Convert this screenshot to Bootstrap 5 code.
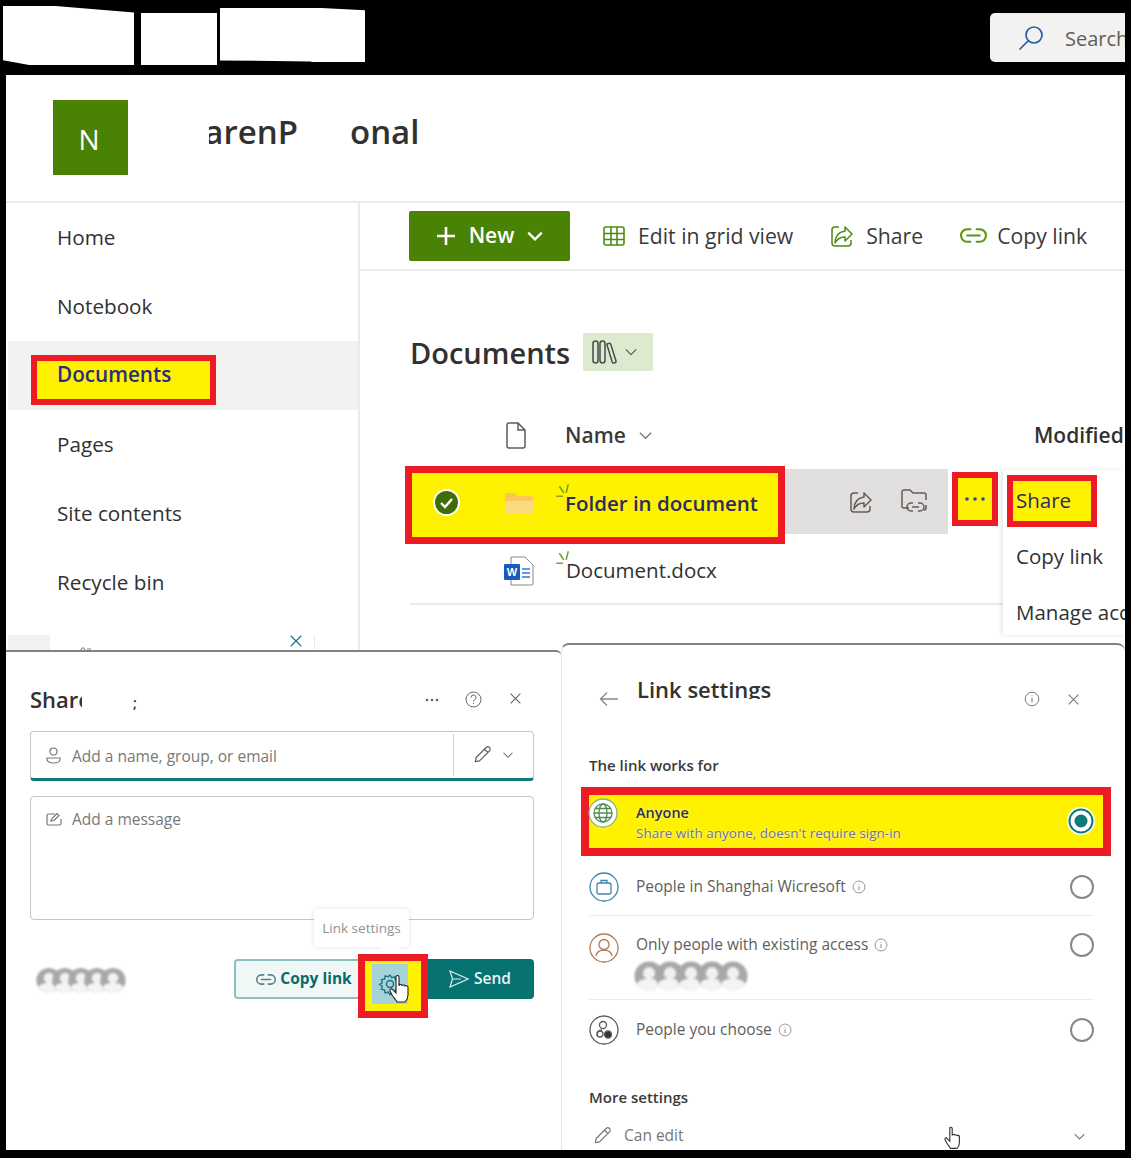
<!DOCTYPE html>
<html lang="en"><head><meta charset="utf-8"><title>Share</title>
<link href="https://cdn.jsdelivr.net/npm/bootstrap@5.3.0/dist/css/bootstrap.min.css" rel="stylesheet">
<style>
html,body{margin:0;height:1158px;overflow:hidden;background:#000}
body{font-family:"Open Sans","Noto Sans",sans-serif;color:#323130;width:1131px}
svg{display:block;flex:none}
.shot{width:1131px;height:1158px;padding-right:6px;overflow:hidden}
.topbar{height:75px;position:relative}
.blot{position:absolute;background:#fff}
.b1{left:3px;top:6px;width:131px;height:59px;clip-path:polygon(0 0,40% 0,100% 11%,100% 100%,20% 100%,0 92%)}
.b2{left:141px;top:13px;width:76px;height:52px}
.b3{left:220px;top:8px;width:145px;height:54px;clip-path:polygon(0 0,70% 0,100% 4%,100% 100%,63% 100%,63% 99%,0 97%)}
.searchbox{position:absolute;left:990px;top:13px;width:135px;height:49px;background:#f3f2f1;border-radius:5px 0 0 5px;font-size:20px;color:#605e5c;overflow:hidden;padding-left:28px;gap:21px;white-space:nowrap}
.sheet{margin-left:6px;background:#fff;height:1075px;overflow:hidden}
.upper{height:575px}
.sitehead{height:128px;border-bottom:2px solid #edebe9;padding-left:47px}
.logo{width:75px;height:75px;background:#498205;color:#fff;font-size:28px;margin-top:25px;padding:2px 3px 0 0}
.sitename{font-size:33px;font-weight:600;color:#323130;margin-top:31px;line-height:52px;height:52px}
.sn1{margin-left:81px;width:89px;overflow:hidden;white-space:nowrap;direction:rtl}
.sn2{margin-left:52px}
.leftnav{width:354px;flex:none;border-right:2px solid #edebe9;position:relative;height:447px;font-size:20.700px}
.navitem{height:69px;padding-left:51px;color:#323130}
.navitem.current{background:#f3f2f1;margin-left:2px;padding-left:23px}
.redbox{border:solid #ed1c24;background:#fff200}
.navmark{width:185px;height:50px;border-width:6px;padding-left:20px;font-weight:600;color:#2b2b80;margin-top:14px;line-height:27px}
.stub{height:16px;position:relative;margin-top:18px}
.stubgrey{position:absolute;left:2px;top:0;width:42px;height:15px;background:#f3f2f1}
.stubx{position:absolute;left:283px;top:-1px}
.stubline{position:absolute;left:308px;top:0;width:1px;height:15px;background:#edebe9}
.stubarc{position:absolute;left:74px;top:11px}
.mainpane{flex:1;position:relative;min-width:0;overflow:hidden;height:447px}
.cmdbar{height:68px;border-bottom:2px solid #edebe9;padding-left:49px;font-size:21.200px;color:#3b3a39;white-space:nowrap}
.newbtn{width:161px;height:50px;flex:none;background:#498205;color:#fff;font-weight:600;border-radius:2px;border:0;font-size:21px;gap:12px;margin-right:32px}
.cmditem{gap:12px;margin-right:37px}
.cmditem.tight{gap:10px;margin-right:0}
.doctitle{padding:62px 0 0 50px;gap:13px;height:134px}
.doctitle h1{font-size:29px;font-weight:600;margin:1px 0 0;color:#323130;line-height:38px}
.libchip{width:70px;height:38px;background:#dcebd0;border-radius:2px;gap:6px;padding-left:8px}
.colhead{height:61px;font-size:21px;font-weight:600;position:relative;padding-left:146px;white-space:nowrap}
.colname{margin-left:39px;gap:12px;color:#3b3a39;width:469px}
.folderrow{height:78px;margin-left:45px;position:relative}
.foldermark{width:380px;height:78px;border-width:7px;font-weight:600;font-size:20.500px;color:#2b2b66;white-space:nowrap}
.rowext{width:163px;height:65px;background:#e1dfdd;gap:27px;padding-left:64px;margin-top:3px}
.dotsmark{width:46px;height:54px;border-width:6px;margin:-13px 0 0 4px}
.docrow{height:71px;margin-left:50px;border-bottom:2px solid #edebe9;margin-right:122px;font-size:20.500px;margin-top:-10px;white-space:nowrap;padding:4px 0 0 156px;position:relative}
.spark{position:absolute}
.rowmenu{position:absolute;right:0;top:267px;width:122px;height:165px;background:#fff;box-shadow:-2px 0 4px rgba(0,0,0,.1);font-size:20.500px;white-space:nowrap;overflow:hidden;padding-left:13px}
.sharemark{width:90px;height:52px;border-width:6px;margin:5px 0 1px -9px;padding-left:3px;line-height:38px;color:#2b2b66}
.menurow{height:56px}
.lower{margin-top:-7px;position:relative;height:507px}
.dlg{background:#fff;position:relative}
.dlgleft{width:555px;height:500px;margin-top:7px;border-top:2px solid #85817e;border-top-right-radius:5px;padding:0 27px 0 24px;flex:none}
.dlgright{flex:1;border-top:2px solid #85817e;border-left:1px solid #e6e6e6;border-radius:8px 8px 0 0;padding:0 31px 0 27px;height:507px;min-width:0}
.dlghead{font-size:22px;font-weight:600;color:#323130;white-space:nowrap;height:79px;padding-top:31px}
.shareclip{width:52px;overflow:hidden}
.shareend{font-size:14px;margin:9px 0 0 51px}
.fieldbox{border:1px solid #c8c6c4;border-radius:4px;color:#7a7876;font-size:15.500px;background:#fff}
.peoplebox{height:50px;border-bottom:3px solid #0b7a78;padding-left:15px;gap:10px}
.peopletext{margin-top:4px;margin-left:1px}
.sep{width:1px;height:42px;background:#d8d6d4;margin-left:auto}
.permwrap{width:69px;gap:10px;padding-left:8px}
.msgbox{height:124px;margin-top:15px;padding:12px 15px;gap:10px;align-items:flex-start}
.actions{margin-top:39px;position:relative}
.avatars{margin:8px 0 0 6px;filter:blur(.8px);width:100px;height:27px}
.avatars svg+svg{margin-left:-10px}
.pill{height:40px;font-weight:600;gap:5px;white-space:nowrap}
.copypill{width:126px;background:#eff7f7;border:2px solid #8cc0bf;color:#0b6a68;border-radius:4px 0 0 4px;margin-left:auto;position:relative;font-size:15.500px;font-weight:700;gap:4px;padding-left:14px}
.gearmark{width:70px;height:64px;border-width:7px;margin:-5px 0 0 -2px;position:relative}
.gearcell{width:36px;height:40px;background:#a6d3d9;margin:3px 0 0 7px}
.sendpill{width:106px;background:#077370;color:#eaf4f4;border-radius:0 4px 4px 0;padding-right:2px;font-size:15.500px}
.tipbox{position:absolute;left:284px;top:-50px;width:95px;height:38px;background:#fff;box-shadow:0 0 5px rgba(0,0,0,.12);font-size:13.500px;color:#929090;border-radius:3px}
.tipbox::after{content:"";position:absolute;left:70px;bottom:-7px;width:14px;height:14px;background:#fff;transform:rotate(45deg)}
.cursor{position:absolute}
.lsetttitle{height:24px;overflow:hidden;font-size:22px;line-height:28px;font-weight:600;margin-top:30px;margin-left:18px;white-space:nowrap;color:#323130}
.lsethead{height:109px}
.grouplabel{font-size:15px;font-weight:600;color:#3b3a39;height:22px;line-height:22px}
.anyone{width:530px;height:69px;border-width:8px;margin:11px 0 0 -8px;position:relative;font-size:14.500px;padding-top:8px}
.anyname{font-weight:600;color:#323130;line-height:20px;text-shadow:0 0 2px #fff}
.anysub{color:#6f6e9a;font-size:13.500px;line-height:21px;text-shadow:0 0 2px #fff;white-space:nowrap}
.optrow{border-bottom:1px solid #edebe9;font-size:15.500px;color:#605e5c;gap:17px;position:relative}
.optrow.flush{border-bottom:0}
.radio{width:24px;height:24px;border:2px solid #8a8886;border-radius:50%;margin-left:auto}
.cand{display:flex;align-items:center;gap:6px;white-space:nowrap}
.avstack{filter:blur(.9px);margin:5px 0 0 -2px}
.avstack svg+svg{margin-left:-9px}
.moregroup{margin-top:26px}
.canedit{height:44px;font-size:15.500px;color:#797775;gap:12px;padding-left:3px;position:relative;margin-top:6px}
</style></head>
<body>
<svg width="0" height="0" style="position:absolute"><defs>
<symbol id="av" viewBox="0 0 32 32"><circle cx="16" cy="16" r="15.500" fill="#a8a8a8"/><circle cx="16" cy="13" r="6.500" fill="#f1f1f1"/><path d="M3 24c3-4 7-5 13-5s10 1 13 5c-3 5-8 8-13 8S6 29 3 24Z" fill="#f4f4f4"/></symbol>
<symbol id="spk" viewBox="0 0 16 16"><path d="M8 14 2 14" fill="none" stroke="#8a9a30" stroke-width="1.600" stroke-linecap="round"/><path d="M9 10 5 4M12 10 14 2" fill="none" stroke="#6b9c20" stroke-width="1.600" stroke-linecap="round"/></symbol>
<symbol id="shr" viewBox="0 0 24 24"><path d="M15 3l7 7-7 7v-4c-5 0-8 2-10 6 0-7 4-11 10-12V3Z" fill="none" stroke="currentColor" stroke-width="1.500" stroke-linejoin="round"/><path d="M9 3H5a3 3 0 0 0-3 3v13a3 3 0 0 0 3 3h13a3 3 0 0 0 3-3v-3" fill="none" stroke="currentColor" stroke-width="1.500"/></symbol>
<symbol id="lnk" viewBox="0 0 26 16"><path d="M10 2H7a6 6 0 0 0 0 12h3M16 2h3a6 6 0 0 1 0 12h-3M7 8h12" fill="none" stroke="currentColor" stroke-width="2" stroke-linecap="round"/></symbol>
<symbol id="pen" viewBox="0 0 24 24"><path d="M4 20l1-5L17 3c1-1 3-1 4 0s1 3 0 4L9 19l-5 1ZM15 5l4 4" fill="none" stroke="currentColor" stroke-width="1.500" stroke-linejoin="round"/></symbol>
<symbol id="chev" viewBox="0 0 16 16"><path d="M2 5l6 6 6-6" fill="none" stroke="currentColor" stroke-width="1.400"/></symbol>
<symbol id="cross" viewBox="0 0 16 16"><path d="M2 2l12 12M14 2 2 14" fill="none" stroke="currentColor" stroke-width="1.400"/></symbol>
<symbol id="inf" viewBox="0 0 16 16"><circle cx="8" cy="8" r="6.800" fill="none" stroke="currentColor"/><path d="M8 4.500v.8M8 7v4.500" stroke="currentColor" stroke-width="1.100"/></symbol>
</defs></svg>

<div class="shot">
  <div class="topbar">
    <div class="blot b1"></div><div class="blot b2"></div><div class="blot b3"></div>
    <div class="searchbox d-flex align-items-center">
      <svg width="26" height="26" viewBox="0 0 26 26" fill="none" stroke="#1f5fa8" stroke-width="1.700"><circle cx="16" cy="10" r="8"/><path d="M10 16 2 24" stroke-linecap="round"/></svg>
      <span style="margin-top:2px">Search</span>
    </div>
  </div>

  <div class="sheet">
    <div class="upper">
      <div class="sitehead d-flex align-items-start">
        <div class="logo d-flex align-items-center justify-content-center">N</div>
        <div class="sitename sn1">arenP</div>
        <div class="sitename sn2">onal</div>
      </div>
      <div class="d-flex">
        <div class="leftnav">
          <div class="navitem d-flex align-items-center">Home</div>
          <div class="navitem d-flex align-items-center">Notebook</div>
          <div class="navitem current d-flex align-items-start"><div class="redbox navmark">Documents</div></div>
          <div class="navitem d-flex align-items-center">Pages</div>
          <div class="navitem d-flex align-items-center">Site contents</div>
          <div class="navitem d-flex align-items-center">Recycle bin</div>
          <div class="stub"><div class="stubgrey"></div>
            <svg class="stubarc" width="12" height="4" viewBox="0 0 12 4" fill="none" stroke="#5b85b5" stroke-width="1.200"><path d="M1 4c1-3 3-3 4 0M7 3h4"/></svg>
            <svg class="stubx" width="14" height="14" viewBox="0 0 14 14" style="color:#137a84"><use href="#cross"/></svg>
            <div class="stubline"></div></div>
        </div>
        <div class="mainpane">
          <div class="cmdbar d-flex align-items-center">
            <button class="newbtn d-flex align-items-center justify-content-center" type="button">
              <svg width="22" height="22" viewBox="0 0 22 22"><path d="M11 2v18M2 11h18" stroke="#fff" stroke-width="2.600"/></svg>
              New
              <svg width="18" height="18" viewBox="0 0 16 16"><path d="M2 5l6 6 6-6" fill="none" stroke="#fff" stroke-width="2"/></svg>
            </button>
            <div class="cmditem d-flex align-items-center">
              <svg width="24" height="24" viewBox="0 0 24 24" fill="none" stroke="#4f8a10" stroke-width="1.600"><rect x="2" y="3" width="20" height="18" rx="2"/><path d="M2 9.500h20M2 15.500h20M9 3v18M15 3v18"/></svg>Edit in grid view</div>
            <div class="cmditem d-flex align-items-center">
              <svg width="24" height="24" style="color:#4f8a10"><use href="#shr"/></svg>Share</div>
            <div class="cmditem tight d-flex align-items-center">
              <svg width="27" height="17" style="color:#5c9410"><use href="#lnk"/></svg>Copy link</div>
          </div>
          <div class="doctitle d-flex align-items-start">
            <h1>Documents</h1>
            <div class="libchip d-flex align-items-center">
              <svg width="27" height="26" viewBox="0 0 27 26" fill="none" stroke="#4a4a4a" stroke-width="1.500"><rect x="2" y="2" width="5" height="22" rx="2.500"/><rect x="9" y="2" width="5" height="22" rx="2.500"/><path d="M16 5l2-.6c1-.2 1.500.2 1.800 1L25 22c.3 1 0 1.500-1 1.800l-1 .2c-1 .2-1.500-.2-1.800-1L16 6Z"/></svg>
              <svg width="14" height="14" style="color:#5a5a5a"><use href="#chev"/></svg>
            </div>
          </div>
          <div class="colhead d-flex align-items-center">
            <svg width="20" height="27" viewBox="0 0 20 27" fill="none" stroke="#5f5e5c" stroke-width="1.500"><path d="M3 1h9l7 7v16a2 2 0 0 1-2 2H3a2 2 0 0 1-2-2V3a2 2 0 0 1 2-2ZM12 1v7h7"/></svg>
            <div class="colname d-flex align-items-center">Name <svg width="15" height="15" style="color:#77757a"><use href="#chev"/></svg></div>
            <span>Modified</span>
          </div>
          <div class="folderrow d-flex">
            <div class="redbox foldermark position-relative">
              <svg class="position-absolute" style="left:21px;top:16px" width="27" height="27" viewBox="0 0 27 27"><circle cx="13.500" cy="13.500" r="13.500" fill="#fff"/><circle cx="13.500" cy="13.500" r="11.500" fill="#3f6d0a"/><path d="M8 14l4 4 7-8" fill="none" stroke="#fff" stroke-width="2.400"/></svg>
              <svg class="position-absolute" style="left:92px;top:19px" width="30" height="22" viewBox="0 0 30 22"><path d="M1 3c0-1 1-2 2-2h8l3 3h13c1 0 2 1 2 2v14c0 1-1 2-2 2H3c-1 0-2-1-2-2V3Z" fill="#f8c65a"/><path d="M1 9h28v11c0 1-1 2-2 2H3c-1 0-2-1-2-2V9Z" fill="#fbd97e"/></svg>
              <svg class="position-absolute spark" style="left:143px;top:10px" width="15" height="15"><use href="#spk"/></svg>
              <span class="position-absolute" style="left:153px;top:15px">Folder in document</span>
            </div>
            <div class="rowext d-flex align-items-center">
              <svg width="24" height="24" style="color:#605e5c"><use href="#shr"/></svg>
              <svg width="28" height="28" viewBox="0 0 28 28" fill="none" stroke="#605e5c" stroke-width="1.500"><path d="M9 20H4a2 2 0 0 1-2-2V4a2 2 0 0 1 2-2h6l3 3h11a2 2 0 0 1 2 2v5M26 17v3a2 2 0 0 1-2 2"/><path d="M13 15h-2a3.500 3.500 0 0 0 0 8h2M18 15h2a3.500 3.500 0 0 1 0 8h-2M12 19h7"/></svg>
            </div>
            <div class="redbox dotsmark d-flex align-items-center justify-content-center align-self-center">
              <svg width="20" height="4" viewBox="0 0 20 4" fill="#1e4fa0"><circle cx="2" cy="2" r="1.800"/><circle cx="10" cy="2" r="1.800"/><circle cx="18" cy="2" r="1.800"/></svg>
            </div>
          </div>
          <div class="docrow d-flex align-items-center">
            <svg class="position-absolute" style="left:94px;top:22px" width="30" height="30" viewBox="0 0 30 30"><path d="M7 1h14l8 8v19a1 1 0 0 1-1 1H7V1Z" fill="#fff" stroke="#8a8886"/><path d="M18 13h8M18 17h8M18 21h8" stroke="#2b7cd3" stroke-width="1.500"/><rect x="0" y="8" width="16" height="16" rx="1" fill="#185abd"/><text x="8" y="20" font-size="11" font-weight="700" text-anchor="middle" fill="#fff" font-family="Liberation Sans">W</text></svg>
            <svg class="position-absolute" style="left:145px;top:16px" width="15" height="15"><use href="#spk"/></svg>
            <span>Document.docx</span>
          </div>
          <div class="rowmenu">
            <div class="redbox sharemark">Share</div>
            <div class="menurow d-flex align-items-center">Copy link</div>
            <div class="menurow d-flex align-items-center">Manage access</div>
          </div>
        </div>
      </div>
    </div>

    <div class="lower d-flex align-items-start">
      <section class="dlg dlgleft">
        <div class="dlghead d-flex align-items-start">
          <div class="shareclip">Share</div><span class="shareend">;</span><span class="ms-auto"></span>
          <svg width="14" height="4" viewBox="0 0 14 4" fill="#66645f" style="margin:15px 26px 0 0"><circle cx="2" cy="2" r="1.300"/><circle cx="7" cy="2" r="1.300"/><circle cx="12" cy="2" r="1.300"/></svg>
          <svg width="17" height="17" viewBox="0 0 17 17" style="margin:8px 27px 0 0" fill="none" stroke="#66645f"><circle cx="8.500" cy="8.500" r="7.500"/><path d="M6 6.500a2.500 2.500 0 1 1 3.500 2.300c-.8.4-1 .8-1 1.700M8.500 12v1"/></svg>
          <svg width="13" height="13" style="color:#66645f;margin:9px 12px 0 0"><use href="#cross"/></svg>
        </div>
        <div class="fieldbox peoplebox d-flex align-items-center">
          <svg width="15" height="17" viewBox="0 0 15 17" fill="none" stroke="#777" stroke-width="1.200"><circle cx="7.500" cy="4.500" r="3.500"/><path d="M1 11h13v1.500c0 2-3 3.500-6.500 3.500S1 14.500 1 12.500V11Z"/></svg>
          <span class="peopletext">Add a name, group, or email</span>
          <div class="sep"></div>
          <div class="permwrap d-flex align-items-center">
            <svg width="20" height="20" style="color:#5f5e5c"><use href="#pen"/></svg>
            <svg width="12" height="12" style="color:#6a6a6a"><use href="#chev"/></svg>
          </div>
        </div>
        <div class="fieldbox msgbox d-flex">
          <svg width="16" height="15" viewBox="0 0 16 15" fill="none" stroke="#777" stroke-width="1.200" style="margin-top:3px"><path d="M9 2H2.500A1.500 1.500 0 0 0 1 3.500v8A1.500 1.500 0 0 0 2.500 13h11a1.500 1.500 0 0 0 1.500-1.500V7"/><path d="M5 9l1-2.500L11 1.500 13 3.500 8 8.500 5 9Z"/></svg>
          <span style="line-height:21px">Add a message</span>
        </div>
        <div class="actions d-flex">
          <div class="avatars d-flex">
            <svg width="26" height="27"><use href="#av"/></svg><svg width="26" height="27"><use href="#av"/></svg><svg width="26" height="27"><use href="#av"/></svg><svg width="26" height="27"><use href="#av"/></svg><svg width="26" height="27"><use href="#av"/></svg>
          </div>
          <div class="tipbox d-flex align-items-center justify-content-center">Link settings</div>
          <div class="pill copypill d-flex align-items-center justify-content-center">
            <svg width="20" height="13" style="color:#5b7f85"><use href="#lnk"/></svg>Copy link</div>
          <div class="redbox gearmark">
            <div class="gearcell d-flex align-items-center justify-content-center">
              <svg width="24" height="24" viewBox="0 0 24 24" fill="none" stroke="#1d6f7c" stroke-width="1.500"><circle cx="12" cy="12" r="3.500"/><path d="M12 2l2 3 3.500-1 .5 3.500 3.500.5-1 3.500 3 1-3 2 1 3.500-3.500.5-.5 3.500-3.500-1-2 3-2-3-3.500 1-.5-3.500L2.500 18l1-3.500-3-2 3-2-1-3.500L6 6.500 6.500 3 10 4l2-2Z" transform="translate(1.200 1.200) scale(.9)"/></svg>
            </div>
            <svg class="cursor" style="left:24px;top:13px" width="22" height="30" viewBox="0 0 22 30"><path d="M7 3c0-2 3-2 3 0v9c0-2 3-2 3 0 0-1.500 3-1.500 3 .4 0-1 3-1 3 .6v8c0 3-2 6-3 7H8c-1-2-3-4-5-7l-2-4c-.6-2 1.500-3 3-1l3 3V3Z" fill="#fff" stroke="#222" stroke-width="1.100"/></svg>
          </div>
          <div class="pill sendpill d-flex align-items-center justify-content-center">
            <svg width="20" height="18" viewBox="0 0 20 18" fill="none" stroke="#dfeeee" stroke-width="1.200"><path d="M1 1l18 8-18 8 2.500-8L1 1ZM3.500 9H12"/></svg>Send</div>
        </div>
      </section>

      <section class="dlg dlgright">
        <div class="lsethead d-flex align-items-start">
          <svg width="20" height="16" viewBox="0 0 20 16" fill="none" stroke="#8a8886" stroke-width="1.300" style="margin:46px 0 0 10px"><path d="M19 8H2M8 1.500 1.500 8 8 14.500"/></svg>
          <div class="lsetttitle">Link settings</div>
          <svg class="ms-auto" width="16" height="16" style="color:#7a7876;margin:46px 27px 0 0"><use href="#inf"/></svg>
          <svg width="13" height="13" style="color:#7a7876;margin:48px 14px 0 0"><use href="#cross"/></svg>
        </div>
        <div class="grouplabel">The link works for</div>
        <div class="redbox anyone d-flex">
          <svg style="margin:-5px 0 0 -1px" width="30" height="30" viewBox="0 0 30 30" fill="none" stroke="#4f8a50" stroke-width="1.300"><circle cx="15" cy="15" r="14" fill="#fff" stroke="#8cb08c"/><circle cx="15" cy="15" r="9"/><ellipse cx="15" cy="15" rx="4" ry="9"/><path d="M6 15h18M7 10.500h16M7 19.500h16"/></svg>
          <div style="margin-left:18px">
            <div class="anyname">Anyone</div>
            <div class="anysub">Share with anyone, doesn't require sign-in</div>
          </div>
          <svg class="position-absolute" style="right:8px;top:12px" width="28" height="28" viewBox="0 0 28 28"><circle cx="14" cy="14" r="14" fill="#fff"/><circle cx="14" cy="14" r="11.500" fill="#fff" stroke="#0b7a78" stroke-width="2"/><circle cx="14" cy="14" r="6.500" fill="#0b7a78"/></svg>
        </div>
        <div class="optrow d-flex align-items-center" style="height:60px;padding-top:2px">
          <svg width="30" height="30" viewBox="0 0 30 30" fill="none" stroke="#3f86ad" stroke-width="1.300"><circle cx="15" cy="15" r="14"/><rect x="8" y="11" width="14" height="11" rx="2"/><path d="M12 11V8.500h6V11"/></svg>
          <div class="cand">People in Shanghai Wicresoft <svg width="14" height="14" style="color:#8a8886"><use href="#inf"/></svg></div>
          <div class="radio"></div>
        </div>
        <div class="optrow d-flex align-items-start" style="height:84px;padding-top:17px">
          <svg width="30" height="30" viewBox="0 0 30 30" fill="none" stroke="#b27a55" stroke-width="1.300"><circle cx="15" cy="15" r="14"/><circle cx="15" cy="11.500" r="5"/><path d="M7 23c1-5 4-6 8-6s7 1 8 6"/></svg>
          <div>
            <div class="cand">Only people with existing access <svg width="14" height="14" style="color:#8a8886"><use href="#inf"/></svg></div>
            <div class="avstack d-flex">
              <svg width="30" height="30"><use href="#av"/></svg><svg width="30" height="30"><use href="#av"/></svg><svg width="30" height="30"><use href="#av"/></svg><svg width="30" height="30"><use href="#av"/></svg><svg width="30" height="30"><use href="#av"/></svg>
            </div>
          </div>
          <div class="radio"></div>
        </div>
        <div class="optrow flush d-flex align-items-center" style="height:60px">
          <svg width="30" height="30" viewBox="0 0 30 30" fill="none" stroke="#5a5a62" stroke-width="1.300"><circle cx="15" cy="15" r="14"/><circle cx="14" cy="10" r="3.500"/><path d="M8 21c0-4 2-6 5-6"/><circle cx="11" cy="19" r="3"/><circle cx="19" cy="19.500" r="3.500" fill="#333"/></svg>
          <div class="cand">People you choose <svg width="14" height="14" style="color:#8a8886"><use href="#inf"/></svg></div>
          <div class="radio"></div>
        </div>
        <div class="moregroup grouplabel">More settings</div>
        <div class="canedit d-flex align-items-center">
          <svg width="20" height="20" style="color:#7a7876"><use href="#pen"/></svg>Can edit
          <svg class="ms-auto" width="13" height="13" style="color:#7a7876;margin-right:8px"><use href="#chev"/></svg>
          <svg class="cursor" style="left:354px;top:12px" width="20" height="24" viewBox="0 0 22 30"><path d="M7 3c0-2 3-2 3 0v9c0-2 3-2 3 0 0-1.500 3-1.500 3 .4 0-1 3-1 3 .6v8c0 3-2 6-3 7H8c-1-2-3-4-5-7l-2-4c-.6-2 1.500-3 3-1l3 3V3Z" fill="#fff" stroke="#333" stroke-width="1.400"/></svg>
        </div>
      </section>
    </div>
  </div>
</div>
<script src="https://cdn.jsdelivr.net/npm/bootstrap@5.3.0/dist/js/bootstrap.bundle.min.js"></script>
</body></html>
